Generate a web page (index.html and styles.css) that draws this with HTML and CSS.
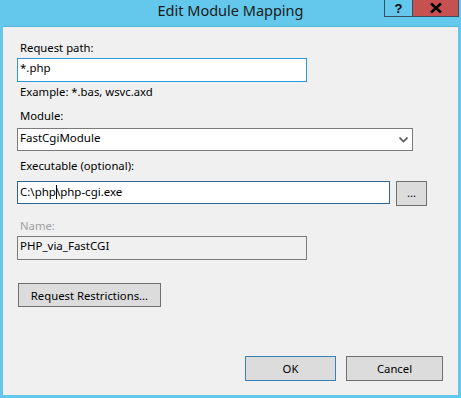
FILE: index.html
```html
<!DOCTYPE html>
<html>
<head>
<meta charset="utf-8">
<title>Edit Module Mapping</title>
<link rel="stylesheet" href="styles.css">
</head>
<body>
<div class="window">
  <div class="titlebar">
    <div class="title">Edit Module Mapping</div>
    <div class="caption-buttons">
      <div class="cap-btn help">?</div>
      <div class="cap-btn close">
        <svg width="12" height="10" viewBox="0 0 12 10"><path d="M1 0.5 L11 9.5 M11 0.5 L1 9.5" stroke="#000" stroke-width="2.6" fill="none"/></svg>
      </div>
    </div>
  </div>
  <div class="client">
    <div class="label l-req">Request path:</div>
    <div class="field focused w-short">*.php</div>
    <div class="label l-example">Example: *.bas, wsvc.axd</div>
    <div class="label l-module">Module:</div>
    <div class="field select w-long">FastCgiModule
      <svg class="chevron" width="9" height="6" viewBox="0 0 9 6"><path d="M0.5 0.5 L4.5 4.5 L8.5 0.5" stroke="#5a5a5a" stroke-width="1.6" fill="none"/></svg>
    </div>
    <div class="label l-exec">Executable (optional):</div>
    <div class="exec-row">
      <div class="field hover w-exec">C:\php<span class="caret"></span>\php-cgi.exe</div>
      <div class="button browse">...</div>
    </div>
    <div class="label disabled l-name">Name:</div>
    <div class="field readonly w-short">PHP_via_FastCGI</div>
    <div class="button restrict">Request Restrictions...</div>
    <div class="footer">
      <div class="button default ok">OK</div>
      <div class="button cancel">Cancel</div>
    </div>
  </div>
</div>
</body>
</html>
```
FILE: styles.css
```css
* { box-sizing: border-box; }
html, body { margin: 0; padding: 0; }
body {
  width: 461px;
  height: 398px;
  background: #63c8eb;
  font-family: "Noto Sans", "Open Sans", sans-serif;
  font-size: 11.3px;
  color: #000;
  overflow: hidden;
}
.window {
  width: 461px;
  height: 398px;
  display: flex;
  flex-direction: column;
  padding: 0 3px 3px 3px;
}
.titlebar {
  height: 26px;
  flex: none;
  display: flex;
  position: relative;
}
.title {
  flex: 1;
  text-align: center;
  font-size: 14.5px;
  line-height: 21px;
  color: #1b1b1b;
}
.caption-buttons {
  position: absolute;
  top: 0;
  right: -1px;
  display: flex;
}
.cap-btn {
  height: 17px;
  border: 1px solid #35505c;
  border-top: none;
  display: flex;
  align-items: center;
  justify-content: center;
}
.help {
  width: 29px;
  font-weight: bold;
  font-size: 13px;
  line-height: 14px;
  font-family: "Liberation Sans", Arial, sans-serif;
  padding-top: 1px;
}
.close {
  width: 46px;
  background: #c75050;
  border-left: none;
}
.client {
  flex: 1;
  background: #f0f0f0;
  border-top: 1px solid #5ab6d6;
  padding: 0 0 0 14px;
  display: flex;
  flex-direction: column;
  align-items: flex-start;
}
.label {
  line-height: 15px;
  height: 15px;
  padding-left: 3px;
}
.disabled { color: #a0a0a0; }
.l-req { margin-top: 13px; margin-bottom: 3px; }
.l-example { margin-top: 2px; }
.l-module { margin-top: 9px; margin-bottom: 5px; }
.l-exec { margin-top: 7px; margin-bottom: 8px; }
.l-name { margin-top: 12px; margin-bottom: 3px; }
.field {
  height: 24px;
  background: #fff;
  border: 1px solid #7a7a7a;
  line-height: 18px;
  padding-left: 2px;
  white-space: nowrap;
  position: relative;
  font-size: 11.5px;
}
.focused { border-color: #2d98dc; }
.hover { border-color: #2f6594; height: 23px; line-height: 20px; }
.readonly { background: #f0f0f0; }
.w-short { width: 290px; }
.w-long { width: 396px; }
.w-exec { width: 373px; }
.select { height: 23px; }
.chevron {
  position: absolute;
  right: 4px;
  top: 8px;
}
.caret {
  display: inline-block;
  width: 1px;
  height: 14px;
  background: #000;
  vertical-align: -3px;
  margin-right: -1px;
}
.exec-row {
  display: flex;
  gap: 6px;
}
.button {
  height: 24px;
  background: #dcdcdc;
  border: 1px solid #707070;
  display: flex;
  align-items: center;
  justify-content: center;
}
.browse { width: 31px; height: 25px; padding-bottom: 2px; }
.restrict { width: 143px; margin-top: 23px; margin-left: 1px; }
.footer {
  margin-top: auto;
  margin-bottom: 14px;
  display: flex;
  gap: 10px;
  margin-left: 228px;
}
.ok, .cancel { width: 91px; height: 25px; }
.cancel { width: 97px; }
.default { border-color: #3c7fb1; }
```
